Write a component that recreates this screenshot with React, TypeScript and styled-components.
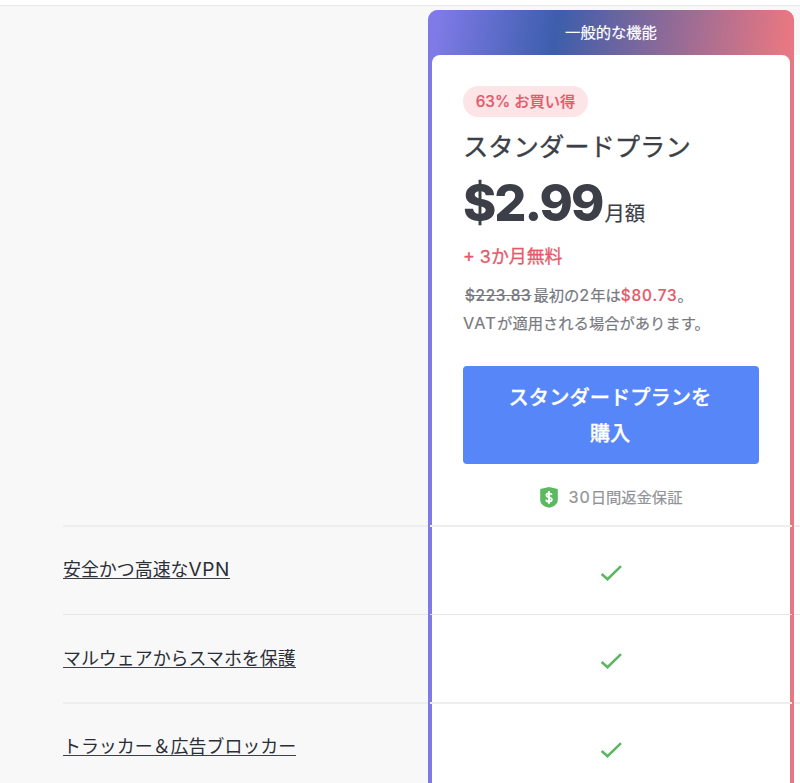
import React from 'react';
import styled, { createGlobalStyle } from 'styled-components';

const GlobalStyle = createGlobalStyle`
  * { box-sizing: border-box; }
  body {
    margin: 0;
    background: #f8f8f8;
    color: #3c3f48;
    font-family: Inter, "Noto Sans CJK JP", sans-serif;
  }
`;

const Page = styled.div`
  height: 783px;
  overflow: hidden;
  display: flex;
  flex-direction: column;
`;

const TopBar = styled.header`
  flex: none;
  height: 6px;
  background: #fff;
  border-bottom: 1px solid #e9e9e9;
`;

const Comparison = styled.main`
  flex: 1;
  display: grid;
  grid-template-columns: 428px 366px 6px;
`;

const FeatureColumn = styled.section`
  padding: 519px 0 0 63px;
`;

const Row = styled.div`
  height: 88.5px;
  border-top: 2px solid #eeeeee;

  &:nth-child(even of .row) {
    border-top: 1px solid #e6e6e6;
  }
`;

const FeatureRow = styled(Row)`
  padding-top: 29px;

  &:nth-child(even of .row) {
    padding-top: 30.5px;
  }
`;

const FeatureLink = styled.a`
  display: block;
  width: max-content;
  height: 23px;
  font-size: 17.95px;
  line-height: 28px;
  color: #2b2e36;
  border-bottom: 1px solid #3c3f48;
  white-space: nowrap;
`;

const Latin = styled.span<{ $size: number; $spacing?: number }>`
  font-size: ${({ $size }) => $size}px;
  letter-spacing: ${({ $spacing = 0 }) => $spacing}px;
  line-height: 1;
`;

const PlanColumn = styled.section`
  margin-top: 4px;
  display: flex;
  flex-direction: column;
  border-radius: 10px 10px 0 0;
  background: linear-gradient(90deg, #7f7ae7 50%, #e77782 50%);
  overflow: hidden;
`;

const PlanHeader = styled.div`
  height: 57px;
  flex: none;
  line-height: 45px;
  text-align: center;
  font-size: 15.3px;
  color: #fff;
  -webkit-text-stroke: 0.2px;
  background: linear-gradient(98deg, #7f7ae7 3%, #3c5eac 35%, #e77782 97%);
`;

const PlanBody = styled.div`
  flex: 1;
  margin: -12px 4px 0;
  border-radius: 8px 8px 0 0;
  background: #fff;
`;

const PlanDetails = styled.div`
  height: 470px;
  padding: 31px 31px 0;
  display: flex;
  flex-direction: column;
  align-items: flex-start;
  white-space: nowrap;
`;

const DealBadge = styled.div`
  width: 125px;
  height: 31px;
  border-radius: 16px;
  background: #fce4e7;
  color: #e55a6a;
  font-size: 15.3px;
  font-weight: 500;
  line-height: 32px;
  text-align: center;
  -webkit-text-stroke: 0.2px;
`;

const PlanTitle = styled.h2`
  margin: 11px 0 0;
  font-size: 25.3px;
  font-weight: 400;
  line-height: 38px;
  -webkit-text-stroke: 0.35px;
`;

const Price = styled.div`
  display: flex;
  align-items: baseline;
  height: 60px;
  margin-top: 7px;
  line-height: 60px;
`;

const Amount = styled.span`
  font-size: 50.5px;
  font-weight: 800;
  letter-spacing: -2px;
`;

const Period = styled.span`
  margin-left: 2px;
  font-size: 20.4px;
  -webkit-text-stroke: 0.2px;
`;

const Bonus = styled.div`
  margin-top: 10px;
  font-size: 17.9px;
  line-height: 28px;
  color: #e55a6a;
  -webkit-text-stroke: 0.3px;
`;

const Terms = styled.p`
  margin: 11px 0 0;
  font-size: 15.3px;
  line-height: 28px;
  color: #77797f;
  -webkit-text-stroke: 0.2px;
`;

const OldPrice = styled.s`
  margin: 0 2px 0 2px;
  font-weight: 500;
  letter-spacing: 0.7px;
`;

const NewPrice = styled.span`
  color: #e55a6a;
  font-weight: 500;
  letter-spacing: 0.9px;
`;

const BuyButton = styled.button`
  width: 296px;
  height: 98px;
  margin-top: 28px;
  padding: 1px 41px 0 39px;
  border: 0;
  border-radius: 4px;
  background: #5686f7;
  color: #fff;
  font: 500 20.3px/36px Inter, "Noto Sans CJK JP", sans-serif;
  -webkit-text-stroke: 0.3px;
`;

const Guarantee = styled.div`
  align-self: center;
  margin-top: 22px;
  display: flex;
  align-items: center;
  gap: 11px;
  font-size: 15.3px;
  line-height: 24px;
  color: #919398;
  -webkit-text-stroke: 0.2px;
`;

const CheckRow = styled(Row)`
  margin: 0 -2px;
  padding-top: 5px;
  display: flex;
  align-items: center;
  justify-content: center;
`;

const NextColumn = styled.section`
  margin-top: 49px;
  padding-top: 470px;
  background: #fff;
`;

const ShieldIcon = () => (
  <svg width="18" height="22" viewBox="0 0 18 22" aria-hidden="true">
    <path d="M9 0 17.800 2V12.700c0 4.300-3.800 6.900-8.800 8.100C4 19.600.2 17 .2 12.700V2Z" fill="#5bb95f" />
    <path
      d="M11.700 7.900C11.400 6.700 10.400 6.100 9 6.100c-1.600 0-2.600.8-2.600 2s.9 1.800 2.600 2.200 2.800 1 2.800 2.300-1.100 2.100-2.800 2.100-2.700-.8-2.900-2.100M9 4v12.800"
      fill="none"
      stroke="#fff"
      strokeWidth="1.900"
    />
  </svg>
);

const CheckIcon = () => (
  <svg width="22" height="16" viewBox="0 0 22 16" aria-hidden="true">
    <path d="m1.700 9 5.800 5.200L21 1.200" fill="none" stroke="#59b760" strokeWidth="2.500" />
  </svg>
);

const features = [
  { name: '安全かつ高速な', latin: 'VPN' },
  { name: 'マルウェアからスマホを保護' },
  { name: 'トラッカー＆広告ブロッカー' },
];

export default function App() {
  return (
    <>
      <GlobalStyle />
      <Page>
        <TopBar />
        <Comparison>
          <FeatureColumn>
            {features.map(({ name, latin }) => (
              <FeatureRow className="row" key={name}>
                <FeatureLink>
                  {name}
                  {latin && <Latin $size={19} $spacing={0.6}>{latin}</Latin>}
                </FeatureLink>
              </FeatureRow>
            ))}
          </FeatureColumn>
          <PlanColumn>
            <PlanHeader>一般的な機能</PlanHeader>
            <PlanBody>
              <PlanDetails>
                <DealBadge>63% お買い得</DealBadge>
                <PlanTitle>スタンダードプラン</PlanTitle>
                <Price>
                  <Amount>$2.99</Amount>
                  <Period>月額</Period>
                </Price>
                <Bonus>+ 3か月無料</Bonus>
                <Terms>
                  <OldPrice>$223.83</OldPrice>最初の<Latin $size={16.3} $spacing={0.9}>2</Latin>年は
                  <NewPrice>$80.73</NewPrice>。<br />
                  <Latin $size={16.3} $spacing={1.2}>VAT</Latin>が適用される場合があります。
                </Terms>
                <BuyButton>
                  スタンダードプランを
                  <br />
                  購入
                </BuyButton>
                <Guarantee>
                  <ShieldIcon />
                  <span>
                    <Latin $size={16.3} $spacing={0.9}>30</Latin>日間返金保証
                  </span>
                </Guarantee>
              </PlanDetails>
              {features.map(({ name }) => (
                <CheckRow className="row" key={name}>
                  <CheckIcon />
                </CheckRow>
              ))}
            </PlanBody>
          </PlanColumn>
          <NextColumn>
            {features.map(({ name }) => (
              <Row className="row" key={name} />
            ))}
          </NextColumn>
        </Comparison>
      </Page>
    </>
  );
}
